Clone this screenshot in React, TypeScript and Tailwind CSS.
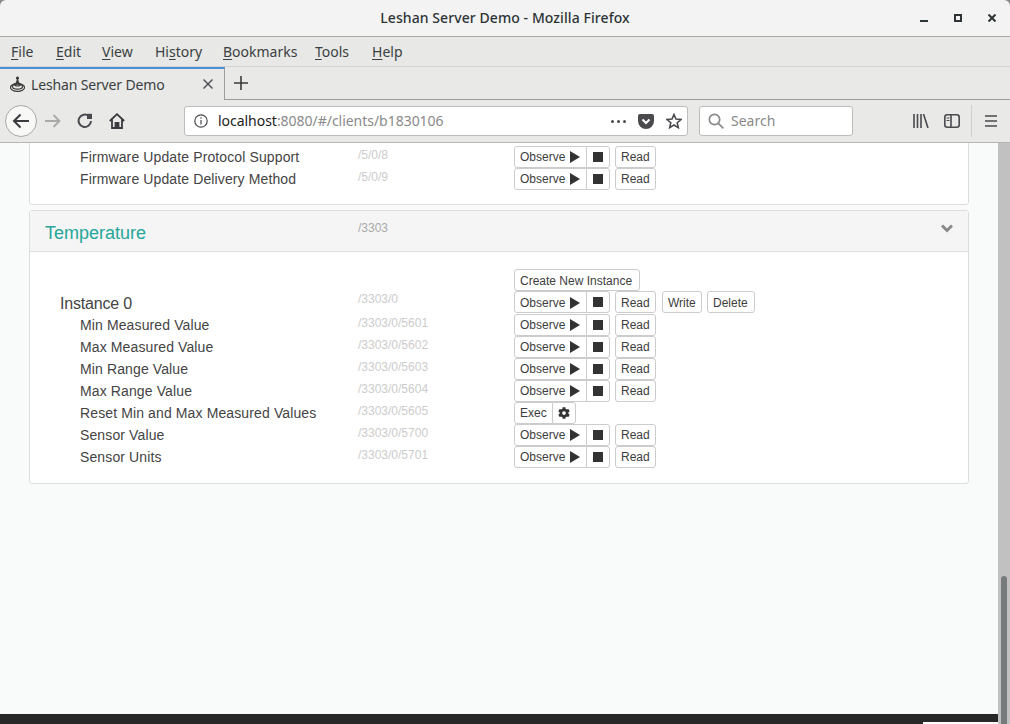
import { FaCog } from "react-icons/fa";

const uiFont = "font-['Noto_Sans','Open_Sans',sans-serif]";

const menus = [
  { pre: "", key: "F", post: "ile", w: "w-[45px]" },
  { pre: "", key: "E", post: "dit", w: "w-[46px]" },
  { pre: "", key: "V", post: "iew", w: "w-[53px]" },
  { pre: "Hi", key: "s", post: "tory", w: "w-[68px]" },
  { pre: "", key: "B", post: "ookmarks", w: "w-[92px]" },
  { pre: "", key: "T", post: "ools", w: "w-[57px]" },
  { pre: "", key: "H", post: "elp", w: "w-[40px]" },
];

const topRows = [
  { name: "Firmware Update Protocol Support", path: "/5/0/8" },
  { name: "Firmware Update Delivery Method", path: "/5/0/9" },
];

const tempRows = [
  { name: "Min Measured Value", path: "/3303/0/5601" },
  { name: "Max Measured Value", path: "/3303/0/5602" },
  { name: "Min Range Value", path: "/3303/0/5603" },
  { name: "Max Range Value", path: "/3303/0/5604" },
  { name: "Reset Min and Max Measured Values", path: "/3303/0/5605", exec: true },
  { name: "Sensor Value", path: "/3303/0/5700" },
  { name: "Sensor Units", path: "/3303/0/5701" },
];

function Btn({ children, className = "" }: { children: React.ReactNode; className?: string }) {
  return (
    <div className={`flex h-[22px] items-center border border-[#ccc] bg-white px-[5px] text-[12px] text-[#3d3d3d] rounded-[3px] ${className}`}>
      {children}
    </div>
  );
}

function ObserveGroup({ className = "" }: { className?: string }) {
  return (
    <div className="flex">
      <Btn className={`w-[73px] rounded-r-none ${className}`}>
        Observe
        <svg width="10" height="12" viewBox="0 0 10 12" className="ml-[5px]">
          <path d="M0 0 L10 6 L0 12 Z" fill="#333" />
        </svg>
      </Btn>
      <Btn className="-ml-px w-[24px] justify-center rounded-l-none">
        <div className="h-[10px] w-[10px] bg-[#333]" />
      </Btn>
    </div>
  );
}

function Row({ name, path, exec }: { name: string; path: string; exec?: boolean }) {
  return (
    <div className="flex h-[22px] items-center">
      <div className="w-[328px] pl-[50px] text-[14px] leading-[22px] tracking-[0.12px] text-[#444]">{name}</div>
      <div className="mb-[4px] w-[156px] text-[12px] leading-[14px] text-[#ccc]">{path}</div>
      {exec ? (
        <div className="flex">
          <Btn className="w-[39px] rounded-r-none">Exec</Btn>
          <Btn className="-ml-px w-[24px] justify-center rounded-l-none">
            <FaCog className="h-[12px] w-[12px] text-[#333]" />
          </Btn>
        </div>
      ) : (
        <div className="flex">
          <ObserveGroup />
          <Btn className="ml-[5px] w-[41px]">Read</Btn>
        </div>
      )}
    </div>
  );
}

function TitleBar() {
  return (
    <div className={`flex h-[37px] items-center border-b border-[#a9a9a7] bg-[#f3f3f3] rounded-t-[6px] ${uiFont}`}>
      <div className="flex-1 pb-[2px] pl-[90px] text-center text-[14px] font-medium tracking-[0.08px] text-[#2e3436]">Leshan Server Demo - Mozilla Firefox</div>
      <div className="flex items-center gap-[26px] pr-[14px]">
        <svg width="8" height="8" viewBox="0 0 8 8">
          <rect x="0" y="6" width="8" height="2" fill="#2e3436" />
        </svg>
        <svg width="8" height="8" viewBox="0 0 8 8">
          <rect x="1" y="1" width="6" height="6" fill="none" stroke="#2e3436" strokeWidth="2" />
        </svg>
        <svg width="8" height="8" viewBox="0 0 8 8">
          <path d="M0.5 0.5 L7.5 7.5 M7.5 0.5 L0.5 7.5" stroke="#2e3436" strokeWidth="2" />
        </svg>
      </div>
    </div>
  );
}

function MenuBar() {
  return (
    <div className={`flex h-[30px] items-center border-b border-[#d2d2d0] bg-[#e8e8e6] pl-[11px] text-[14px] text-[#3a3f41] ${uiFont}`}>
      {menus.map((m) => (
        <div key={m.key} className={m.w}>
          {m.pre}
          <span className="underline underline-offset-2">{m.key}</span>
          {m.post}
        </div>
      ))}
    </div>
  );
}

function TabBar() {
  return (
    <div className={`flex h-[33px] bg-[#e9e9e7] ${uiFont}`}>
      <div className="flex h-[33px] w-[225px] items-center border-r border-[#9c9c9a] border-t-2 border-t-[#4a90d9] pb-[1px] pl-[10px] pr-[11px]">
        <svg width="15" height="16" viewBox="0 0 15 16" fill="none" stroke="#3a3a3a">
          <circle cx="7.5" cy="2" r="1.6" fill="#3a3a3a" stroke="none" />
          <path d="M7.5 3 L6 8 L9 8 Z" fill="#3a3a3a" />
          <ellipse cx="7.5" cy="8.6" rx="3" ry="1.4" strokeWidth="1.2" />
          <ellipse cx="7.5" cy="10.5" rx="5" ry="2.6" strokeWidth="1.2" />
          <ellipse cx="7.5" cy="11.5" rx="7" ry="3.8" strokeWidth="1.2" />
        </svg>
        <div className="ml-[6px] flex-1 text-[14px] tracking-[-0.15px] text-[#3a3f41]">Leshan Server Demo</div>
        <svg width="10" height="10" viewBox="0 0 10 10">
          <path d="M0.5 0.5 L9.5 9.5 M9.5 0.5 L0.5 9.5" stroke="#4a4a4f" strokeWidth="1.4" />
        </svg>
      </div>
      <div className="flex flex-1 items-center border-b border-[#9c9c9a] pl-[9px]">
        <svg width="14" height="14" viewBox="0 0 14 14">
          <path d="M7 0 V14 M0 7 H14" stroke="#3a3a3a" strokeWidth="1.6" />
        </svg>
      </div>
    </div>
  );
}

function NavBar() {
  return (
    <div className={`flex h-[43px] items-center border-b border-[#b5b5b3] bg-[#e9e9e7] pl-[5px] ${uiFont}`}>
      <div className="flex h-[32px] w-[32px] items-center justify-center rounded-full border border-[#a8a8a6] bg-[#f8f8f7]">
        <svg width="18" height="16" viewBox="0 0 18 16" fill="none" stroke="#3a3a3f" strokeWidth="2">
          <path d="M17 8 H2 M8.5 1.5 L2 8 L8.5 14.5" />
        </svg>
      </div>
      <svg width="16" height="14" viewBox="0 0 16 14" fill="none" stroke="#a9a9a9" strokeWidth="1.8" className="ml-[8px]">
        <path d="M0 7 H14 M8.5 1 L14.5 7 L8.5 13" />
      </svg>
      <svg width="16" height="16" viewBox="0 0 16 16" fill="none" stroke="#4a4a4f" strokeWidth="2" className="ml-[16px]">
        <path d="M14 8 A6.2 6.2 0 1 1 11.8 3" />
        <path d="M10 0.8 H15 V6 H10 Z" fill="#4a4a4f" stroke="none" />
      </svg>
      <svg width="16" height="16" viewBox="0 0 16 16" fill="none" stroke="#3a3a3f" strokeWidth="1.8" className="ml-[16px]">
        <path d="M0.8 8 L8 1.2 L15.2 8 M3 6.5 V15 H13 V6.5" />
        <path d="M6.5 15 V10 H9.5 V15" fill="#3a3a3f" />
      </svg>
      <div className="ml-[59px] flex h-[30px] w-[504px] items-center rounded-[3px] border border-[#bdbdbb] bg-white pl-[9px] pr-[5px]">
        <svg width="14" height="14" viewBox="0 0 14 14" fill="none" stroke="#4a4a4f" strokeWidth="1.2">
          <circle cx="7" cy="7" r="6.2" />
          <path d="M7 6 V10.5 M7 3.2 V4.8" />
        </svg>
        <div className="ml-[10px] flex-1 pb-[2px] text-[14px] tracking-[-0.03px] text-[#8a8a8a]">
          <span className="text-[#222]">localhost</span>:8080/#/clients/b1830106
        </div>
        <div className="flex gap-[3px]">
          <div className="h-[3px] w-[3px] rounded-full bg-[#4a4a4f]" />
          <div className="h-[3px] w-[3px] rounded-full bg-[#4a4a4f]" />
          <div className="h-[3px] w-[3px] rounded-full bg-[#4a4a4f]" />
        </div>
        <svg width="16" height="15" viewBox="0 0 16 15" className="ml-[12px]">
          <path d="M2 0 H14 A2 2 0 0 1 16 2 V7 A8 8 0 0 1 0 7 V2 A2 2 0 0 1 2 0 Z" fill="#4a4a4f" />
          <path d="M4.5 5.5 L8 9 L11.5 5.5" fill="none" stroke="#fff" strokeWidth="2" />
        </svg>
        <svg width="16" height="16" viewBox="0 0 16 16" fill="none" stroke="#4a4a4f" strokeWidth="1.6" className="ml-[12px]">
          <path d="M8 1.5 L10 6 L15 6.5 L11.2 9.7 L12.3 14.6 L8 12 L3.7 14.6 L4.8 9.7 L1 6.5 L6 6 Z" />
        </svg>
      </div>
      <div className="ml-[11px] flex h-[30px] w-[154px] items-center rounded-[3px] border border-[#bdbdbb] bg-white pl-[8px]">
        <svg width="16" height="16" viewBox="0 0 16 16" fill="none" stroke="#8a8a8a" strokeWidth="1.7">
          <circle cx="6.5" cy="6.5" r="5.2" />
          <path d="M10.3 10.3 L15.4 15.4" />
        </svg>
        <div className="ml-[7px] pb-[2px] text-[14px] text-[#8a8a8a]">Search</div>
      </div>
      <svg width="16" height="14" viewBox="0 0 16 14" stroke="#4a4a4f" strokeWidth="1.6" className="ml-[60px]">
        <path d="M1 0 V14 M4.5 0 V14 M8 0 V14 M10.5 0 L15 14" />
      </svg>
      <svg width="16" height="14" viewBox="0 0 16 14" fill="none" stroke="#4a4a4f" className="ml-[15px]">
        <rect x="0.8" y="0.8" width="14.4" height="12.4" rx="2.5" strokeWidth="1.6" />
        <path d="M7 1 V13" strokeWidth="1.6" />
        <path d="M2.5 4 H5.5 M2.5 6.5 H5.5" strokeWidth="1.2" />
      </svg>
      <div className="ml-[11px] h-[32px] w-px bg-[#cfcfcd]" />
      <svg width="12" height="12" viewBox="0 0 12 12" stroke="#4a4a4f" strokeWidth="1.6" className="ml-[13px]">
        <path d="M0 1 H12 M0 6 H12 M0 11 H12" />
      </svg>
    </div>
  );
}

export default function App() {
  return (
    <div className="flex h-[724px] w-[1010px] flex-col overflow-hidden bg-[#8a8a8a] font-['Liberation_Sans',Arial,sans-serif]">
      <TitleBar />
      <MenuBar />
      <TabBar />
      <NavBar />
      <div className="flex min-h-0 flex-1">
        <div className="flex min-w-0 flex-1 flex-col bg-[#f9fbfa]">
          <div className="min-h-0 flex-1 overflow-hidden px-[29px]">
            <div className="-mt-[20px] rounded-b-[3px] border border-[#ddd] bg-white pb-[14px]">
              <div className="h-[22px]" />
              {topRows.map((r) => (
                <Row key={r.path} name={r.name} path={r.path} />
              ))}
            </div>
            <div className="mt-[5px] rounded-[3px] border border-[#ddd] bg-white pb-[15px]">
              <div className="flex h-[41px] border-b border-[#ddd] bg-[#f5f5f5]">
                <div className="w-[328px] pl-[15px] pt-[9px] text-[18px] leading-[26px] text-[#26a69a]">Temperature</div>
                <div className="flex-1 pt-[10px] text-[12px] leading-[14px] text-[#aaa]">/3303</div>
                <svg width="12" height="9" viewBox="0 0 12 9" fill="none" stroke="#888" strokeWidth="3" className="mr-[15px] mt-[13px]">
                  <path d="M1 1.5 L6 6.5 L11 1.5" />
                </svg>
              </div>
              <div className="pt-[17px]">
                <div className="flex h-[22px]">
                  <div className="ml-[484px]">
                    <Btn className="w-[126px] pt-[1px]">Create New Instance</Btn>
                  </div>
                </div>
                <div className="flex h-[23px] items-start">
                  <div className="w-[328px] pl-[30px] pt-[1px] text-[16px] leading-[24px] tracking-[-0.2px] text-[#444]">Instance 0</div>
                  <div className="w-[156px] pt-[1px] text-[12px] leading-[14px] text-[#ccc]">/3303/0</div>
                  <div className="flex">
                    <ObserveGroup className="pt-[2px]" />
                    <Btn className="ml-[5px] w-[41px] pt-[2px]">Read</Btn>
                    <Btn className="ml-[6px] w-[40px] pt-[2px]">Write</Btn>
                    <Btn className="ml-[5px] w-[48px] pt-[2px]">Delete</Btn>
                  </div>
                </div>
                {tempRows.map((r) => (
                  <Row key={r.path} name={r.name} path={r.path} exec={r.exec} />
                ))}
              </div>
            </div>
          </div>
          <div className="flex h-[10px] items-end justify-end bg-[#282828]">
            <div className="h-[2px] w-[75px] bg-white" />
          </div>
        </div>
        <div className="flex w-[12px] flex-col items-center bg-[#c0c1c0] pt-[433px]">
          <div className="w-[6px] flex-1 rounded-t-[3px] bg-[#777b7b]" />
        </div>
      </div>
    </div>
  );
}
